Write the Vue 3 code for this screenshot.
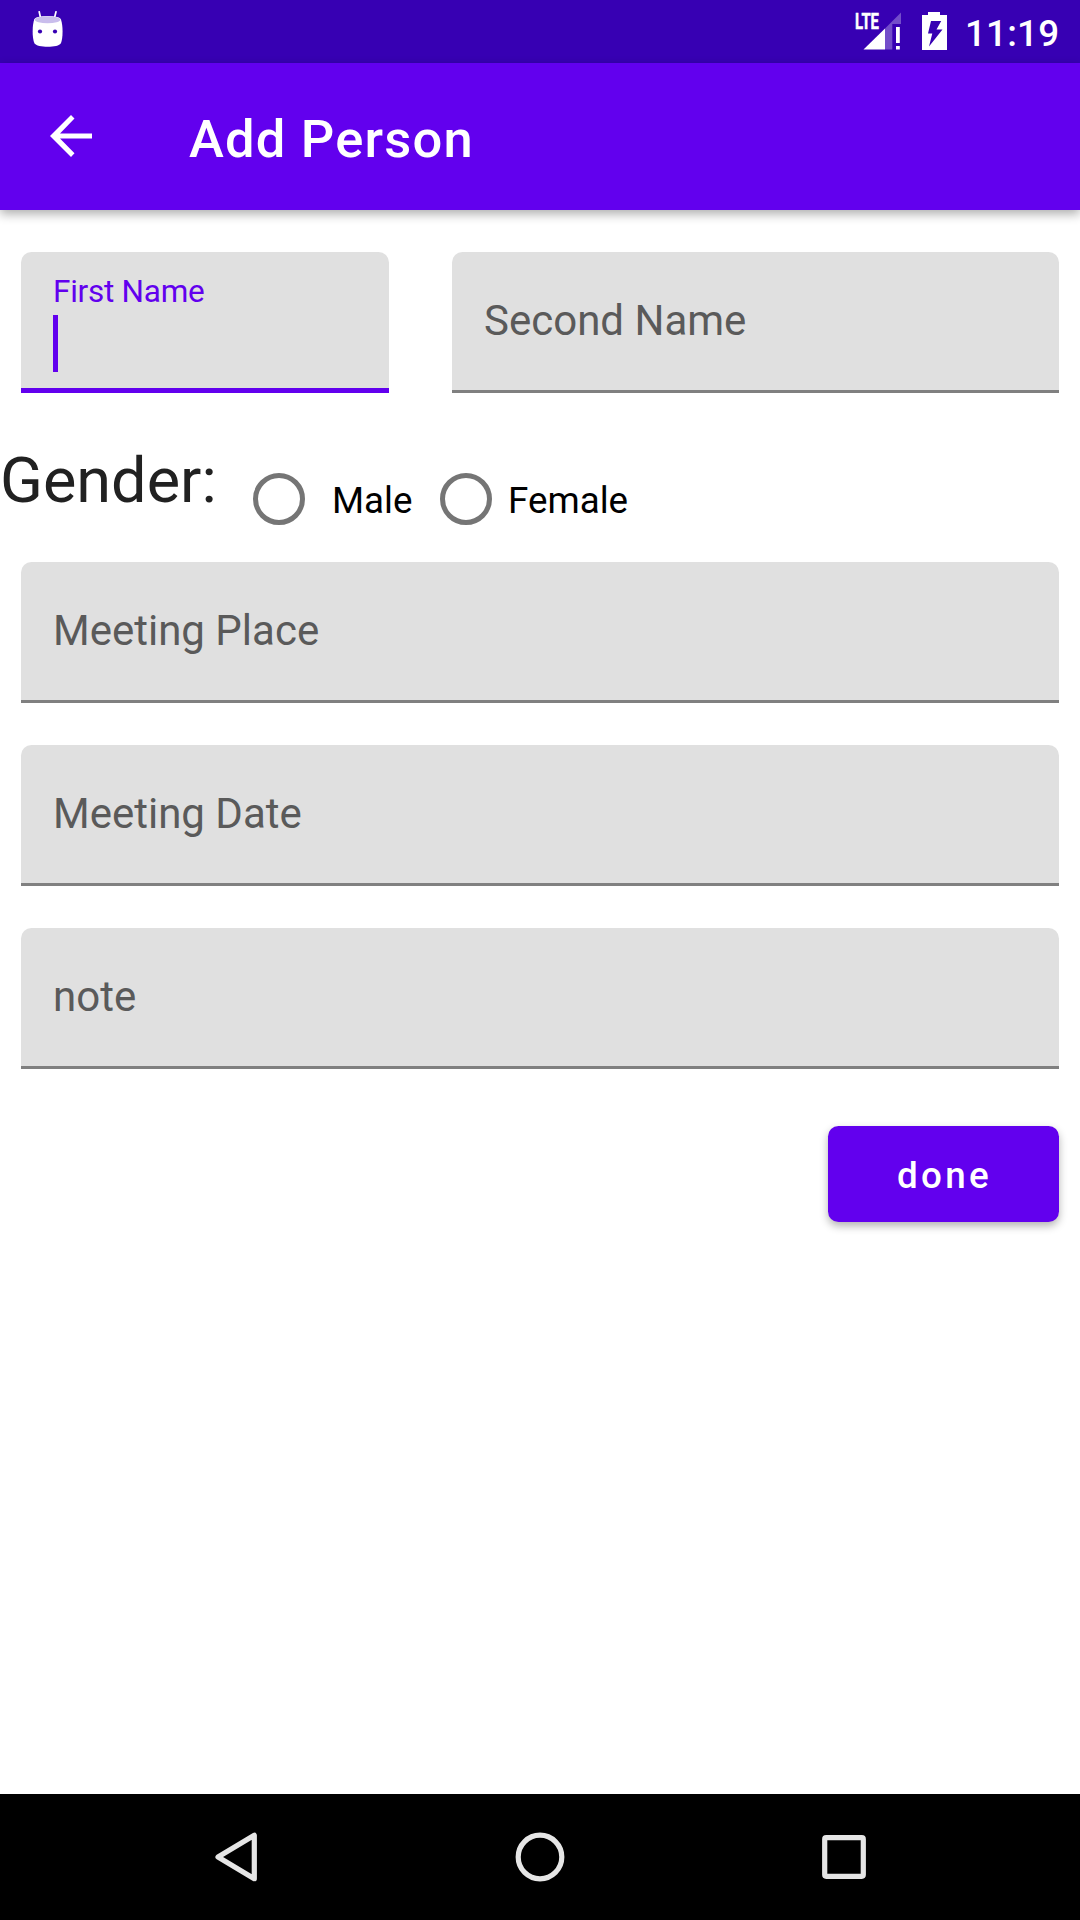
<script setup>
import { ref } from 'vue'

const details = ref([
  { id: 'place', label: 'Meeting Place' },
  { id: 'date', label: 'Meeting Date' },
  { id: 'note', label: 'note' },
])
</script>

<template>
  <div class="screen">
    <header class="status">
      <svg class="droid" width="32" height="37" viewBox="0 0 32 37">
        <path d="M7.200 .8 8.800 8M24 .8 22.200 8" stroke="#fff" stroke-width="1.700" stroke-linecap="round" />
        <path d="M2.200 8.500C.2 14 0 27 2.400 32.300 5 37 26.500 37 28.900 32.300 31.200 27 31 14 29 8.500Z" fill="#fff" />
        <ellipse cx="15.600" cy="8.800" rx="13.400" ry="3.900" fill="#fff" />
        <ellipse cx="15.600" cy="8.800" rx="12.800" ry="3.500" fill="#c9bdec" />
        <circle cx="8" cy="20.500" r="2.100" fill="#3700b3" />
        <circle cx="23" cy="20.500" r="2.100" fill="#3700b3" />
      </svg>
      <div class="indicators">
        <svg class="signal" width="48" height="40" viewBox="0 0 48 40">
          <path d="M30 15.500 46 -.5V11H37.300V36.500H30Z" fill="#fff" fill-opacity=".3" />
          <path d="M8.500 36.500 30 15.500V36.500Z" fill="#fff" />
          <path d="M41 14H44.800V30H41ZM41 33H44.800V36.500H41Z" fill="#fff" />
          <text x="0" y="16.300" textLength="24" lengthAdjust="spacingAndGlyphs" font-size="22.500" font-weight="700" fill="#fff" stroke="#fff" stroke-width=".5">LTE</text>
        </svg>
        <svg class="battery" width="25" height="38" viewBox="0 0 25 38">
          <path d="M0 3H6V0H18V3H25V38H0Z" fill="#fff" />
          <path d="M9 9H19.200L14.500 17.500H20.500L7 34.500 10.300 21.500H6Z" fill="#3700b3" />
        </svg>
        <span class="clock">11:19</span>
      </div>
    </header>

    <div class="appbar">
      <svg class="back" width="42" height="42" viewBox="0 0 42 42">
        <path d="M42 18.400V23.600H10L24.500 38.200 21 42 0 21 21 0 24.500 3.600 10 18.400Z" fill="#fff" />
      </svg>
      <h1>Add Person</h1>
    </div>

    <main>
      <div class="names">
        <div class="field first focused">
          <span class="float">First Name</span>
          <span class="caret"></span>
        </div>
        <div class="field second"><span>Second Name</span></div>
      </div>

      <div class="gender">
        <span class="caption">Gender:</span>
        <label class="choice male"><i></i><span>Male</span></label>
        <label class="choice female"><i></i><span>Female</span></label>
      </div>

      <div class="details">
        <div v-for="d in details" :key="d.id" class="field"><span>{{ d.label }}</span></div>
      </div>

      <button type="button">done</button>
    </main>

    <nav>
      <svg width="50" height="50" viewBox="0 0 50 50">
        <path d="M43.300 3.300V46.700L7 25Z" />
      </svg>
      <svg width="50" height="50" viewBox="0 0 50 50"><circle cx="25" cy="25" r="21.800" /></svg>
      <svg width="50" height="50" viewBox="0 0 50 50"><rect x="5.700" y="5.700" width="38.600" height="38.600" rx="1.500" /></svg>
    </nav>
  </div>
</template>

<style>
body {
  margin: 0;
  background: #fff;
}
</style>

<style scoped>
.screen {
  width: 1080px;
  height: 1920px;
  display: flex;
  flex-direction: column;
  background: #fff;
  font-family: Roboto, sans-serif;
  overflow: hidden;
}
.status {
  height: 63px;
  flex: none;
  display: flex;
  justify-content: space-between;
  background: #3700b3;
}
.droid {
  margin: 11px 0 0 32px;
}
.indicators {
  display: flex;
  color: #fff;
}
.signal {
  margin: 13px 19px 0 0;
  overflow: visible;
}
.battery {
  margin-top: 12px;
}
.clock {
  width: 93px;
  margin: 0 22px 0 18px;
  font-size: 36.75px;
  font-weight: 500;
  line-height: 67px;
  letter-spacing: .2px;
  white-space: nowrap;
}
.appbar {
  height: 147px;
  flex: none;
  display: flex;
  align-items: flex-start;
  background: #6200ee;
  color: #fff;
  box-shadow: 0 4px 10px rgba(0, 0, 0, .32);
}
.back {
  margin: 52px 0 0 50px;
}
h1 {
  margin: 0 0 0 97px;
  font-size: 52.5px;
  font-weight: 500;
  line-height: 152px;
  letter-spacing: 1.2px;
}
main {
  flex: 1;
  display: flex;
  flex-direction: column;
}
.names {
  display: flex;
  gap: 63px;
  padding: 42px 21px 0;
}
.field {
  height: 141px;
  box-sizing: border-box;
  padding: 0 32px;
  border-bottom: 3px solid #808080;
  border-radius: 10.5px 10.5px 0 0;
  background: #e0e0e0;
  color: #5a5a5a;
  font-size: 42px;
  line-height: 137px;
}
.first {
  width: 368px;
}
.second {
  flex: 1;
}
.focused {
  display: flex;
  flex-direction: column;
  border-bottom: 5px solid #6200ee;
  color: #6200ee;
}
.float {
  height: 63px;
  font-size: 31.5px;
  line-height: 80px;
  letter-spacing: -.25px;
}
.caret {
  width: 5px;
  height: 57px;
  background: #6200ee;
}
.gender {
  height: 169px;
  display: flex;
}
.caption {
  width: 253px;
  color: #212121;
  font-size: 63px;
  line-height: 175px;
}
.choice {
  display: flex;
  align-items: flex-start;
  color: #000;
  font-size: 36.75px;
  line-height: 216px;
}
.choice i {
  width: 52px;
  height: 52px;
  margin-top: 80px;
  box-sizing: border-box;
  border: 5.25px solid #757575;
  border-radius: 50%;
}
.male {
  width: 187px;
}
.male span {
  margin-left: 27px;
}
.female span {
  margin-left: 16px;
}
.details {
  display: flex;
  flex-direction: column;
  gap: 42px;
  padding: 0 21px;
}
button {
  align-self: flex-end;
  width: 231px;
  height: 96px;
  margin: 57px 21px 0 0;
  padding: 3px 0 0 2px;
  border: 0;
  border-radius: 10.5px;
  background: #6200ee;
  color: #fff;
  font-family: inherit;
  font-size: 36.75px;
  font-weight: 500;
  line-height: 93px;
  letter-spacing: .0893em;
  box-shadow: 0 4px 8px rgba(0, 0, 0, .3);
}
nav {
  height: 126px;
  flex: none;
  display: flex;
  align-items: center;
  justify-content: center;
  gap: 254px;
  background: #000;
}
nav svg {
  fill: none;
  stroke: #e6e6e6;
  stroke-width: 5.2;
  stroke-linejoin: round;
}
</style>
